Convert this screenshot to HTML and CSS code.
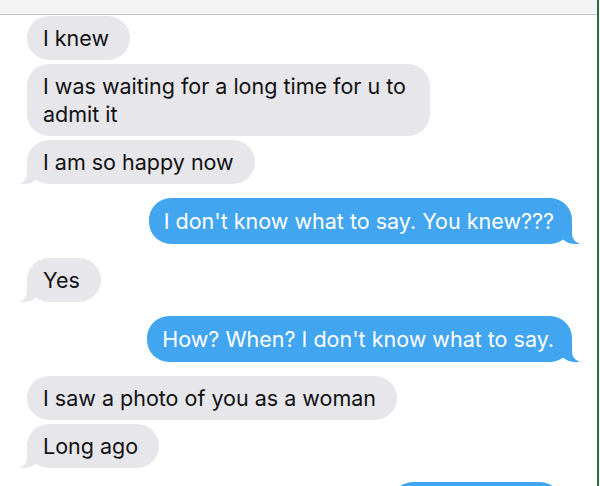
FILE: index.html
```html
<!DOCTYPE html>
<html lang="en">
<head>
  <meta charset="UTF-8">
  <meta name="viewport" content="width=device-width, initial-scale=1.0">
  <title>Messages</title>
  <link rel="stylesheet" href="styles.css">
</head>
<body>
  <div class="screen">
    <div class="top-bar"></div>

    <div class="thread">
      <div class="group them">
        <div class="bubble">I knew</div>
        <div class="bubble">I was waiting for a long time for u to admit it</div>
        <div class="bubble tail">I am so happy now</div>
      </div>

      <div class="group me">
        <div class="bubble tail">I don't know what to say. You knew???</div>
      </div>

      <div class="group them">
        <div class="bubble tail">Yes</div>
      </div>

      <div class="group me">
        <div class="bubble tail">How? When? I don't know what to say.</div>
      </div>

      <div class="group them">
        <div class="bubble">I saw a photo of you as a woman</div>
        <div class="bubble tail">Long ago</div>
      </div>

      <div class="group me">
        <div class="bubble partial">&nbsp;</div>
      </div>
    </div>
  </div>
</body>
</html>
```

FILE: styles.css
```css
html, body {
  margin: 0;
  height: 486px;
  overflow: hidden;
  background: #fff;
}

.screen {
  height: 486px;
  border-right: 2px solid #2f6b3c;
  margin-right: 1px;
  font-family: Inter, "Noto Sans", sans-serif;
  font-size: 21.5px;
  color: #111;
}

.top-bar {
  height: 14px;
  background: #f4f4f4;
  border-bottom: 1px solid #c6c6c6;
}

.thread {
  display: flex;
  flex-direction: column;
  gap: 14px;
  padding: 1px 25px 0 27px;
}

.group {
  display: flex;
  flex-direction: column;
  gap: 4px;
}

.them {
  align-items: flex-start;
}

.me {
  align-items: flex-end;
}

.bubble {
  position: relative;
  line-height: 28px;
  border-radius: 22px;
}

.them .bubble {
  max-width: 366px;
  padding: 8px 21px 8px 16px;
  background: #e6e6eb;
}

.me .bubble {
  max-width: 420px;
  padding: 9px 18px 9px 15px;
  background: #41a5f0;
  color: #fff;
}

/* tails, drawn with a coloured corner and a white mask */
.bubble.tail::before,
.bubble.tail::after {
  content: "";
  position: absolute;
  bottom: 0;
  height: 20px;
}

.them .tail::before {
  left: -7px;
  width: 20px;
  background: #e6e6eb;
  border-bottom-right-radius: 16px 14px;
}

.them .tail::after {
  left: -10px;
  width: 10px;
  background: #fff;
  border-bottom-right-radius: 10px;
}

.me .tail::before {
  right: -7px;
  width: 20px;
  background: #41a5f0;
  border-bottom-left-radius: 16px 14px;
}

.me .tail::after {
  right: -10px;
  width: 10px;
  background: #fff;
  border-bottom-left-radius: 10px;
}

.me .partial {
  width: 138px;
  margin-right: 10px;
}
```
